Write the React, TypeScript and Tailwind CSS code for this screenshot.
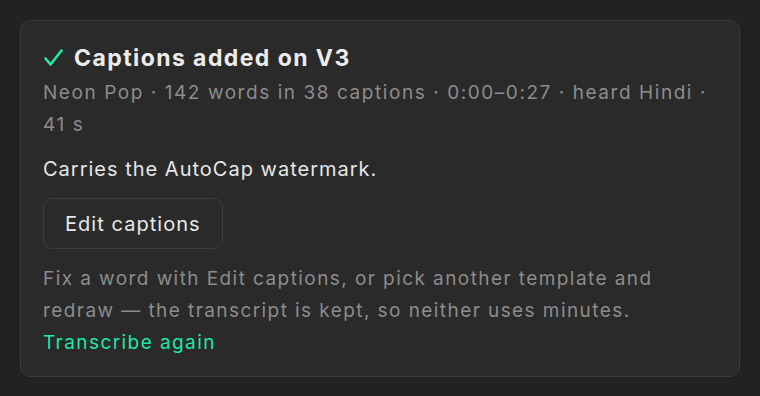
const App = () => {
  return (
    <div
      className="min-h-screen w-full bg-[#222222] p-5"
      style={{ fontFamily: "Inter, 'Noto Sans', sans-serif" }}
    >
      <div className="w-[720px] h-[357px] rounded-[10px] border border-[#3a3a3a] bg-[#2a2a2a] px-[22px] pt-[22px]">
        {/* Header */}
        <div className="flex items-center h-[30px]">
          <svg width="20" height="18" viewBox="0 0 20 18" className="shrink-0 ml-[1px] mr-[10px]">
            <polyline
              points="1.5,9.5 6.5,15.5 17.5,1.5"
              fill="none"
              stroke="#1ee9a0"
              strokeWidth="2.6"
              strokeLinecap="round"
              strokeLinejoin="round"
            />
          </svg>
          <h2 className="text-[23px] leading-[30px] font-bold tracking-[0.062em] text-[#ececec]">
            Captions added on V3
          </h2>
        </div>
        <p className="mt-[4px] text-[19px] leading-[32px] tracking-[0.082em] text-[#8c8c8c]">
          Neon Pop · 142 words in 38 captions · 0:00–0:27 · heard Hindi · 41 s
        </p>

        <p className="mt-[13px] text-[20px] leading-[30px] tracking-[0.05em] text-[#e6e6e6]">
          Carries the AutoCap watermark.
        </p>

        <button className="mt-[14px] h-[51px] px-[21px] rounded-[9px] border border-[#3c3c3c] bg-[#2a2a2a] text-[20px] tracking-[0.052em] text-[#e8e8e8]">
          Edit captions
        </button>

        <p className="mt-[14px] text-[19px] leading-[32px] tracking-[0.075em] text-[#8c8c8c]">
          Fix a word with Edit captions, or pick another template and redraw — the transcript is kept, so neither uses minutes.
        </p>
        <button className="block text-[19px] leading-[32px] tracking-[0.075em] text-[#1ee9a0]">
          Transcribe again
        </button>
      </div>
    </div>
  );
};

export default App;
